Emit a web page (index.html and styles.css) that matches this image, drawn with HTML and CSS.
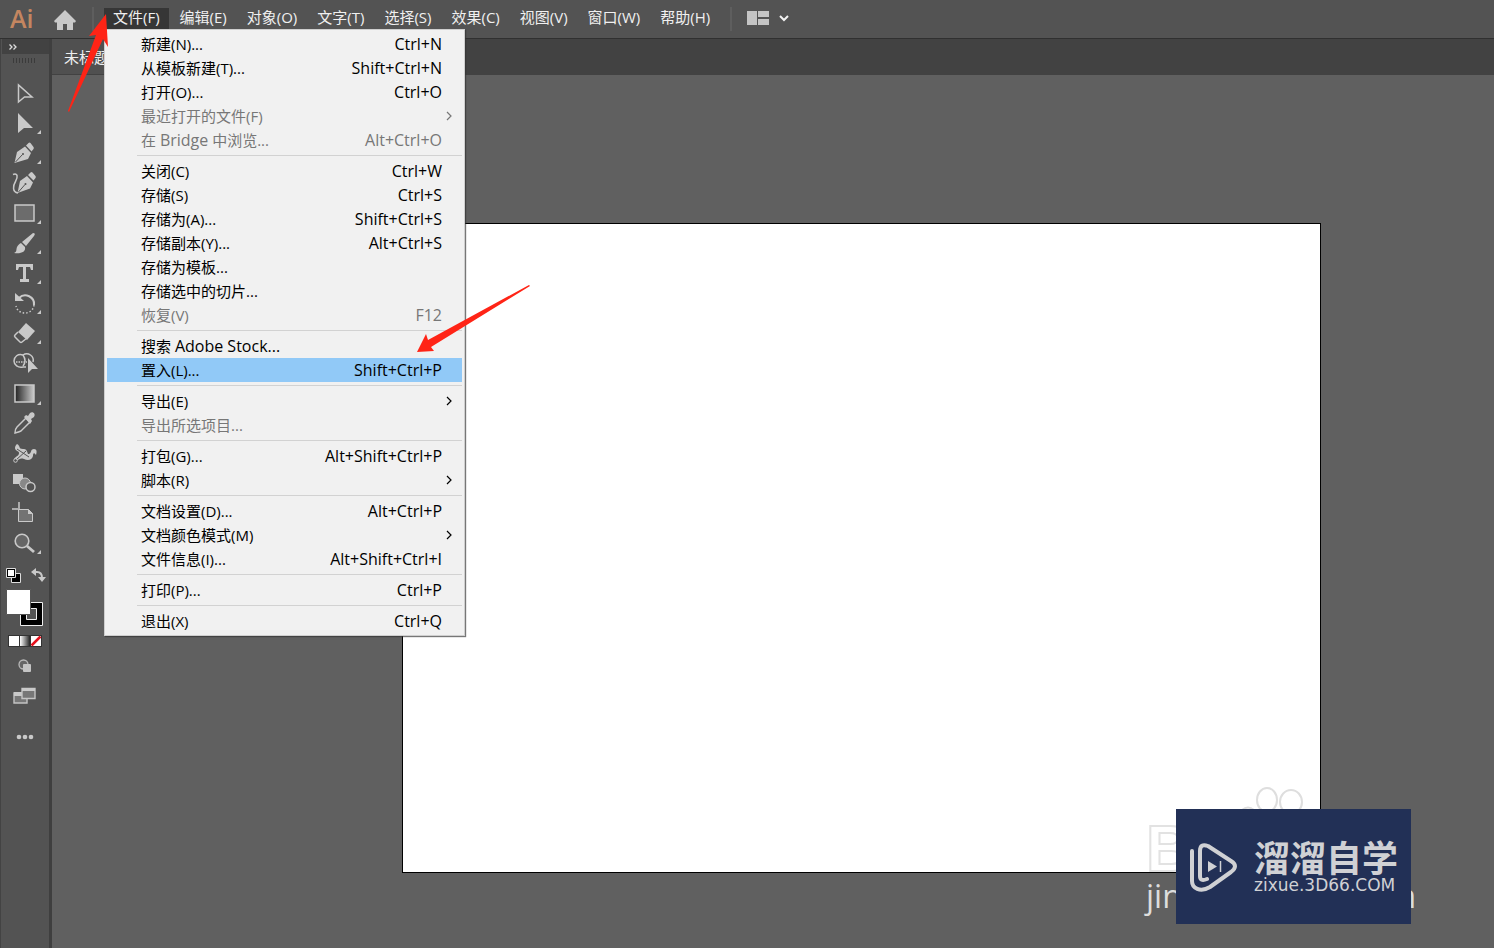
FILE: index.html
```html
<!DOCTYPE html>
<html lang="zh-CN">
<head>
<meta charset="utf-8">
<title>Illustrator</title>
<link rel="stylesheet" href="styles.css">
</head>
<body>
<div class="app">
  <header class="menubar">
    <span class="brand">Ai</span>
    <button class="home" aria-label="主页"><svg width="22" height="20" viewBox="0 0 22 20"><path d="M11 0L0 11l1 1.500h2V20h6v-6h4v6h6v-7.500h2L22 11z" fill="#c9c9c9"/></svg></button>
    <span class="rule"></span>
    <nav class="menus">
      <div class="menu-item">
        <button class="menu-button open">文件(F)</button>
        <div class="dropdown" role="menu">
          <button class="row"><span>新建(N)...</span><kbd>Ctrl+N</kbd></button>
          <button class="row"><span>从模板新建(T)...</span><kbd>Shift+Ctrl+N</kbd></button>
          <button class="row"><span>打开(O)...</span><kbd>Ctrl+O</kbd></button>
          <button class="row sub" disabled><span>最近打开的文件(F)</span><svg class="chev" width="8" height="10" viewBox="0 0 8 10"><path d="M2 1l4 4-4 4"/></svg></button>
          <button class="row" disabled><span>在 <span class="latin">Bridge</span> 中浏览...</span><kbd>Alt+Ctrl+O</kbd></button>
          <hr>
          <button class="row"><span>关闭(C)</span><kbd>Ctrl+W</kbd></button>
          <button class="row"><span>存储(S)</span><kbd>Ctrl+S</kbd></button>
          <button class="row"><span>存储为(A)...</span><kbd>Shift+Ctrl+S</kbd></button>
          <button class="row"><span>存储副本(Y)...</span><kbd>Alt+Ctrl+S</kbd></button>
          <button class="row"><span>存储为模板...</span></button>
          <button class="row"><span>存储选中的切片...</span></button>
          <button class="row" disabled><span>恢复(V)</span><kbd>F12</kbd></button>
          <hr>
          <button class="row"><span>搜索 <span class="latin">Adobe Stock...</span></span></button>
          <button class="row active"><span>置入(L)...</span><kbd>Shift+Ctrl+P</kbd></button>
          <hr>
          <button class="row sub"><span>导出(E)</span><svg class="chev" width="8" height="10" viewBox="0 0 8 10"><path d="M2 1l4 4-4 4"/></svg></button>
          <button class="row" disabled><span>导出所选项目...</span></button>
          <hr>
          <button class="row"><span>打包(G)...</span><kbd>Alt+Shift+Ctrl+P</kbd></button>
          <button class="row sub"><span>脚本(R)</span><svg class="chev" width="8" height="10" viewBox="0 0 8 10"><path d="M2 1l4 4-4 4"/></svg></button>
          <hr>
          <button class="row"><span>文档设置(D)...</span><kbd>Alt+Ctrl+P</kbd></button>
          <button class="row sub"><span>文档颜色模式(M)</span><svg class="chev" width="8" height="10" viewBox="0 0 8 10"><path d="M2 1l4 4-4 4"/></svg></button>
          <button class="row"><span>文件信息(I)...</span><kbd>Alt+Shift+Ctrl+I</kbd></button>
          <hr>
          <button class="row"><span>打印(P)...</span><kbd>Ctrl+P</kbd></button>
          <hr>
          <button class="row"><span>退出(X)</span><kbd>Ctrl+Q</kbd></button>
        </div>
      </div>
      <button class="menu-button">编辑(E)</button>
      <button class="menu-button">对象(O)</button>
      <button class="menu-button">文字(T)</button>
      <button class="menu-button">选择(S)</button>
      <button class="menu-button">效果(C)</button>
      <button class="menu-button">视图(V)</button>
      <button class="menu-button">窗口(W)</button>
      <button class="menu-button">帮助(H)</button>
    </nav>
    <span class="rule"></span>
    <button class="workspace" aria-label="排列文档"><svg width="44" height="16" viewBox="0 0 44 16"><path d="M0 1h10v14H0zM11 1h11v6H11zM11 9h11v6H11z" fill="#c4c4c4"/><path d="M33 6l4 4 4-4" fill="none" stroke="#f2f2f2" stroke-width="2"/></svg></button>
  </header>

  <div class="body">
    <aside class="toolbox">
      <button class="collapse" aria-label="展开"><svg width="8" height="6" viewBox="0 0 8 6"><path d="M.5.500L3 3 .5 5.500M4.500.500L7 3 4.500 5.500" fill="none" stroke="#ddd" stroke-width="1.300"/></svg></button>
      <div class="grip"></div>

      <button class="tool" aria-label="选择工具"><svg viewBox="0 0 48 30"><path d="M18.500 6v17l6-5h7.500z" fill="none" stroke="#c9c9c9" stroke-width="1.500"/></svg></button>
      <button class="tool" aria-label="直接选择工具"><svg viewBox="0 0 48 30"><path class="f" d="M18 4v20l6-5h9z"/><path class="f" d="M41 21v4h-4z"/></svg></button>
      <button class="tool" aria-label="钢笔工具"><svg viewBox="0 0 48 30"><path class="f" d="M26 6.500l2.500-2.500q1-1 2 0l3 4q.7 1 0 2l-2 2.500zM25 7.500l6 6.500-3 6-13.500 4L17 13z"/><path d="M15.500 23l7-7.500" stroke="#535353"/><circle cx="23" cy="15" r="1" fill="#535353"/><path class="f" d="M41 21v4h-4z"/></svg></button>
      <button class="tool" aria-label="曲率工具"><svg viewBox="0 0 48 30"><path class="f" d="M28 6l2.500-2.500q1-1 2 0l3 3.500q.7 1 0 2l-2 2.500zM27 7l6 6.500-3 6-12.500 4.500L20 12z"/><path d="M18.500 23l6.500-7.500" stroke="#535353"/><circle cx="25.500" cy="15" r="1" fill="#535353"/><path class="s" d="M13 5.500c5-2 5 3 2.500 7S12 23 18 24"/></svg></button>
      <button class="tool" aria-label="矩形工具"><svg viewBox="0 0 48 30"><path d="M15 6h19v16H15z" fill="#6c6c6c" stroke="#c9c9c9" stroke-width="1.500"/><path class="f" d="M41 21v4h-4z"/></svg></button>
      <button class="tool" aria-label="画笔工具"><svg viewBox="0 0 48 30"><path class="f" d="M33 4q3 0 1 3l-8 10-4-4zM21 14l4 4c1 5-4 7-11 6 3-1 2-3 3-6 1-2 2-3 4-4z"/><path class="f" d="M41 21v4h-4z"/></svg></button>
      <button class="tool" aria-label="文字工具"><svg viewBox="0 0 48 30"><path class="f" d="M16 5h17v6h-2l-1-3h-4v12h3v3h-9v-3h3V8h-4l-1 3h-2z"/><path class="f" d="M41 21v4h-4z"/></svg></button>
      <button class="tool" aria-label="旋转工具"><svg viewBox="0 0 48 30"><path d="M19 9c6-6 16-1 15 7" fill="none" stroke="#c9c9c9" stroke-width="2"/><path class="f" d="M15 4v8h9z"/><path class="s" d="M34 16c-1 10-16 11-18 1" stroke-dasharray="1.500 2"/><path class="f" d="M41 21v4h-4z"/></svg></button>
      <button class="tool" aria-label="橡皮擦工具"><svg viewBox="0 0 48 30"><path class="f" d="M26 4l9 8-8 9-9-8z"/><path class="s" d="M18 13l-3 3q-1 1 0 2l5 5q1 1 2 0l5-4"/><path class="f" d="M41 21v4h-4z"/></svg></button>
      <button class="tool" aria-label="形状生成器工具"><svg viewBox="0 0 48 30"><path class="s" d="M33 13a6.500 6.500 0 0 0-10-7c-5-2-9 2-9 6s4 7 9 6h3"/><path class="s" d="M16 13h11" stroke-dasharray="1.500 1"/><path class="s" d="M23 6q4 6 0 11" stroke-width="1"/><path class="f" d="M28 9v15l4-4h6z"/></svg></button>
      <button class="tool" aria-label="渐变工具"><svg viewBox="0 0 48 30"><defs><linearGradient id="g"><stop stop-color="#222"/><stop offset="1" stop-color="#ccc"/></linearGradient></defs><path d="M15 6h19v17H15z" fill="url(#g)" stroke="#c9c9c9" stroke-width="1.500"/><path class="f" d="M41 22v4h-4z"/></svg></button>
      <button class="tool" aria-label="吸管工具"><svg viewBox="0 0 48 30"><path class="s" d="M26 9l4 4-9 9q-2 1-6 2 0-4 2-6z"/><path class="f" d="M24 8l2-2 2 1 2-3c3-2 6 1 4 4l-3 2 1 2-2 3z"/></svg></button>
      <button class="tool" aria-label="操控变形工具"><svg viewBox="0 0 48 30"><path class="f" d="M17 5c4 2 1 5 6 5 5-1 4 6 6 5 3-1 1-5 5-5 3 0 3 3 2 6-2-3-3-2-3 1-1 4-5 5-9 3-4-1-4 0-8 2l-2-2c2-3 5-3 5-6 0-2-4-2-4-5 0-2 1-3 2-4z"/><path d="M17 10l12 8M16 21l10-9" stroke="#535353" fill="none"/><circle cx="15.500" cy="21.500" r="1.800" fill="#535353" stroke="#c9c9c9"/></svg></button>
      <button class="tool" aria-label="混合工具"><svg viewBox="0 0 48 30"><path class="f" d="M13 5h10v10H13z"/><circle cx="25" cy="14.500" r="5.500" fill="#888" stroke="#c9c9c9"/><circle cx="30.500" cy="18" r="4.500" fill="#535353" stroke="#c9c9c9" stroke-width="1.500"/></svg></button>
      <button class="tool" aria-label="画板工具"><svg viewBox="0 0 48 30"><path class="s" d="M12 10h8M19 3v6"/><path d="M18.500 10.500h10l4 4v8h-14z" fill="#737373" stroke="#c9c9c9"/><path class="f" d="M28 10v5h5z"/></svg></button>
      <button class="tool" aria-label="缩放工具"><svg viewBox="0 0 48 30"><circle cx="22" cy="12" r="6.800" fill="#666" stroke="#c9c9c9" stroke-width="1.600"/><path d="M27 17l7 6" stroke="#c9c9c9" stroke-width="2.800"/><path class="f" d="M41 21v4h-4z"/></svg></button>

      <div class="swap">
        <button aria-label="默认填色和描边"><svg width="15" height="15" viewBox="0 0 15 15"><path d="M5.500 5.500h9v9h-9z" stroke="#ddd"/><path d="M.5.500h9v9h-9z" stroke="#ddd"/><path d="M2 2h6v6H2z" fill="#fff"/></svg></button>
        <button aria-label="互换填色和描边"><svg width="15" height="15" viewBox="0 0 15 15"><path d="M4 4h2q5 0 5 6" fill="none" stroke="#c9c9c9" stroke-width="2"/><path class="f" d="M5 0v8L0 4zM7 9h8l-4 5z"/></svg></button>
      </div>
      <button class="fill" aria-label="填色和描边"><svg width="38" height="38" viewBox="0 0 38 38"><path d="M14.500 13.500h22v23h-22z" fill="#000" stroke="#eee"/><path d="M20.500 19.500h10v11h-10z" fill="#535353" stroke="#eee"/><path d="M.5.500h24v25H.5z" fill="#fff" stroke="#555"/></svg></button>
      <button class="modes" aria-label="颜色模式"><svg width="34" height="12" viewBox="0 0 34 12"><defs><linearGradient id="m"><stop stop-color="#fff"/><stop offset="1" stop-color="#222"/></linearGradient></defs><path d="M0 0h34v12H0z" fill="#333"/><path d="M1 1h10v10H1zM23 1h10v10H23z" fill="#fff"/><path d="M12 1h10v10H12z" fill="url(#m)"/><path d="M23.500 10.500l9-9" stroke="#e5101c" stroke-width="2.500"/></svg></button>
      <button class="draw" aria-label="绘图模式"><svg width="14" height="14" viewBox="0 0 14 14"><circle cx="5.500" cy="5.500" r="4.500" fill="#666" stroke="#b8b8b8" stroke-width="1.300"/><rect x="5" y="5" width="8" height="8" rx="1" fill="#c4c4c4"/></svg></button>
      <button class="screen" aria-label="更改屏幕模式"><svg width="24" height="18" viewBox="0 0 24 18"><path d="M1 6h13v10H1z" fill="#777" stroke="#c4c4c4" stroke-width="1.400"/><path class="f" d="M1 5h13v4H1z"/><path d="M9 1.500h13v10H9z" fill="#777" stroke="#c4c4c4" stroke-width="1.400"/><path class="f" d="M9 1h13v3H9z"/></svg></button>
      <button class="more" aria-label="编辑工具栏"><svg width="18" height="6" viewBox="0 0 18 6"><circle class="f" cx="3" cy="3" r="2.300"/><circle class="f" cx="9" cy="3" r="2.300"/><circle class="f" cx="15" cy="3" r="2.300"/></svg></button>
    </aside>

    <main class="document">
      <div class="tabs"><button class="tab">未标题-1</button></div>
      <div class="canvas"><div class="artboard"></div></div>
    </main>
  </div>

  <svg class="arrow arrow-top" width="42" height="98" viewBox="0 0 42 98"><path d="M38 0L21 22l7-1L0 97l1 1L35 25l5 8z" fill="#ff2416"/></svg>
  <svg class="arrow arrow-place" width="114" height="68" viewBox="0 0 114 68"><path d="M113 0l1 1L15 62l3 4-17 1L10 49l2 6z" fill="#ff2416"/></svg>

  <div class="mark">
    <svg class="paw" width="64" height="26" viewBox="0 0 64 26"><g fill="none" stroke="#dedede" stroke-width="2"><ellipse cx="27" cy="13" rx="10" ry="12"/><ellipse cx="51" cy="15" rx="11" ry="12"/><path d="M2 23q6-5 12 0"/></g></svg>
    <span class="mark-b">B</span>
    <div class="mark-url"><span>jin</span><span>m</span></div>
  </div>
  <div class="badge">
    <svg width="48" height="50" viewBox="0 0 48 50"><g fill="none" stroke="#d0d1d4" stroke-width="4" stroke-linecap="round" stroke-linejoin="round"><path d="M17 37q-7 3-7-3V9q0-8 8-5l23 15q8 5 0 11L20 45C10 51 2 46 2 39V9"/></g><path d="M18 19v11l9-5.500z" fill="#d0d1d4"/><path d="M30.500 19v11" stroke="#d0d1d4" stroke-width="1.500"/></svg>
    <div class="badge-text"><strong>溜溜自学</strong><span>zixue.3D66.COM</span></div>
  </div>
</div>
</body>
</html>
```

FILE: styles.css
```css
* { box-sizing: border-box; }
body {
  margin: 0;
  font-family: "Open Sans", "Noto Sans CJK SC", sans-serif;
  font-size: 15px;
}
button {
  margin: 0;
  padding: 0;
  border: 0;
  background: none;
  font: inherit;
  color: inherit;
}
svg { display: block; }
.f { fill: #c9c9c9; }
.s { fill: none; stroke: #c9c9c9; stroke-width: 1.5; }

.app {
  position: relative;
  display: flex;
  flex-direction: column;
  min-height: 100vh;
  overflow: hidden;
  background: #606060;
}

.menubar {
  display: flex;
  align-items: center;
  height: 39px;
  padding-bottom: 1px;
  background: #535353;
  border-bottom: 1px solid #303030;
  color: #f0f0f0;
}
.brand {
  width: 54px;
  padding: 0 0 2px 10px;
  font-family: "Open Sans", sans-serif;
  font-size: 25px;
  font-weight: 600;
  line-height: 34px;
  color: #c48660;
}
.home { padding-top: 2px; }
.rule {
  width: 2px;
  height: 24px;
  margin: 0 10px 0 16px;
  background: #5e5e5e;
}
.menus { display: flex; gap: 2px; }
.menu-item { position: relative; }
.menu-button {
  display: block;
  height: 21px;
  padding: 0 9px 3px;
  line-height: 18px;
  white-space: nowrap;
}
.menu-button.open { background: #363636; }
.menus + .rule { margin: 0 15px 0 11px; }
.workspace { padding-bottom: 2px; }

.dropdown {
  position: absolute;
  z-index: 2;
  top: 100%;
  left: 0;
  width: 361px;
  padding: 2px;
  background: #f1f1f1;
  border: 1px solid #cfcfcf;
  box-shadow: 1px 1px 1px #333a;
  color: #000;
}
.row {
  display: flex;
  align-items: center;
  justify-content: space-between;
  width: 100%;
  height: 24px;
  padding: 0 20px 0 34px;
  line-height: 24px;
  white-space: nowrap;
}
.row.sub { padding-right: 9px; }
.row.active { background: #91c9f7; }
.row:disabled { color: #777; }
.row kbd,
.latin { font-family: inherit; font-size: 16px; }
.chev { fill: none; stroke: currentColor; stroke-width: 1.2; }
.dropdown hr {
  height: 1px;
  margin: 3px 0 3px 30px;
  border: 0;
  background: #d2d2d2;
}

.body { display: flex; flex: 1; }
.toolbox {
  display: flex;
  flex-direction: column;
  width: 52px;
  padding-left: 1px;
  background: #535353;
  border-left: 1px solid #434343;
  border-right: 3px solid #3f3f3f;
}
.collapse {
  height: 15px;
  padding-left: 7px;
  background: #424242;
}
.grip {
  width: 24px;
  height: 5px;
  margin: 4px 0 16px 11px;
  background: repeating-linear-gradient(90deg, #3b3b3b 0 1px, #535353 1px 3px);
}
.tool { height: 30px; }
.tool svg { width: 48px; height: 30px; margin-left: -2px; }
.swap {
  display: flex;
  align-items: center;
  gap: 10px;
  height: 27px;
  margin-top: 3px;
  padding-left: 4px;
}
.fill { height: 38px; padding-left: 4px; }
.modes { height: 28px; padding-left: 6px; }
.draw { height: 22px; padding-left: 16px; }
.screen { height: 38px; padding-left: 11px; }
.more { height: 44px; padding-left: 14px; }

.document {
  display: flex;
  flex: 1;
  flex-direction: column;
  min-width: 0;
}
.tabs { height: 36px; background: #424242; }
.tab {
  height: 35px;
  padding: 0 12px;
  background: #505050;
  color: #eee;
}
.canvas {
  display: flex;
  flex: 1;
  padding: 148px 173px 75px 350px;
  background: #606060;
}
.artboard { flex: 1; background: #fff; border: 1px solid #000; }

.arrow { position: absolute; z-index: 3; }
.arrow-top { top: 14px; left: 68px; }
.arrow-place { top: 285px; left: 416px; }

.mark {
  position: absolute;
  right: 78px;
  bottom: 32px;
  display: flex;
  flex-direction: column;
  width: 270px;
  color: #ddd;
}
.paw { margin: 0 0 9px 94px; }
.mark-b {
  font: 700 64px/54px "Liberation Sans", sans-serif;
  color: #fff;
  -webkit-text-stroke: 2px #e2e2e2;
}
.mark-url {
  display: flex;
  justify-content: space-between;
  font-size: 32px;
  line-height: 40px;
}
.badge {
  position: absolute;
  right: 83px;
  bottom: 24px;
  display: flex;
  align-items: center;
  gap: 16px;
  width: 235px;
  height: 115px;
  padding-left: 14px;
  background: #223056;
  color: #d0d1d4;
}
.badge-text { display: flex; flex-direction: column; }
.badge-text strong {
  font: 700 36px/36px "Noto Sans CJK SC", sans-serif;
}
.badge-text span {
  font: 17px/22px "DejaVu Sans", sans-serif;
}
```
